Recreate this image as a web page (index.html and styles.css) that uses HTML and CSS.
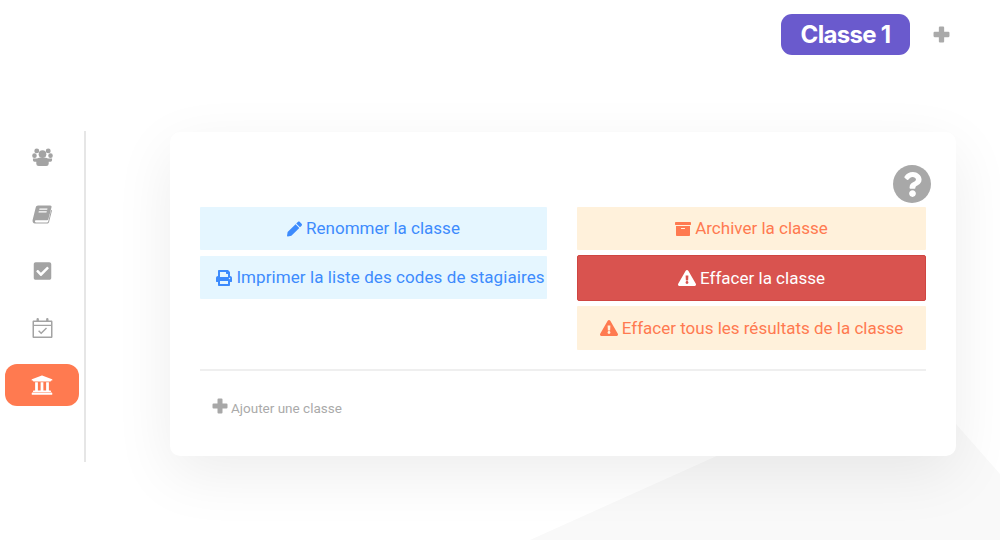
FILE: index.html
```html
<!DOCTYPE html>
<html lang="fr">
<head>
<meta charset="utf-8">
<title>Classes</title>
<link rel="stylesheet" href="styles.css">
</head>
<body>
<svg class="decor" viewBox="0 0 1000 540" aria-hidden="true">
  <polygon class="decor-b" points="530,540 730,450 956,424 1000,474 1000,540"/>
</svg>
<header class="topbar">
  <div class="tab">Classe 1</div>
  <svg class="tab-add" viewBox="0 0 16 16"><path d="M5.500 1.500a1 1 0 0 1 1-1h3a1 1 0 0 1 1 1v4h4a1 1 0 0 1 1 1v3a1 1 0 0 1-1 1h-4v4a1 1 0 0 1-1 1h-3a1 1 0 0 1-1-1v-4h-4a1 1 0 0 1-1-1v-3a1 1 0 0 1 1-1h4z"/></svg>
</header>
<main class="main">
  <nav class="sidebar">
    <div class="nav-item">
      <svg class="nav-icon" viewBox="0 0 22 20"><circle cx="5" cy="3.600" r="2.600"/><circle cx="17" cy="3.600" r="2.600"/><circle cx="2.600" cy="8.600" r="2.400"/><circle cx="19.400" cy="8.600" r="2.400"/><path d="M1 11.500h4.500v3.500H2.500A1.500 1.500 0 0 1 1 13.500zM21 11.500h-4.500v3.500h3A1.500 1.500 0 0 0 21 13.500z"/><circle cx="11" cy="7" r="4"/><path d="M4.500 13.500c0-1.800 1.500-2.800 3-2.800h7c1.500 0 3 1 3 2.800v3.500a2.500 2.500 0 0 1-2.500 2.500H7a2.500 2.500 0 0 1-2.500-2.500z"/></svg>
    </div>
    <div class="nav-item">
      <svg class="nav-icon" viewBox="0 0 20 20"><path fill-rule="evenodd" d="M5.500 1.500h12.200c1 0 1.600.8 1.300 1.800l-3 11.500c-.3 1-1 1.500-2 1.500H3.400c-1.300 0-1.300 2.200 0 2.200h11.100c.6 0 1-.3 1.200-.9l3-11.800.8.700-3 11.800c-.3 1-1 1.200-2 1.200H2.500C.8 19.500-.3 17.800.1 16L3.300 3.300C3.600 2.200 4.400 1.500 5.500 1.500zM7 4.500l-.3 1.200h8l.3-1.200zM6.300 7.300 6 8.500h8l.3-1.200z"/></svg>
    </div>
    <div class="nav-item">
      <svg class="nav-icon" viewBox="0 0 448 512"><path d="M400 480H48c-26.510 0-48-21.490-48-48V80c0-26.510 21.490-48 48-48h352c26.510 0 48 21.490 48 48v352c0 26.510-21.490 48-48 48zm-204.686-98.059l184-184c6.248-6.248 6.248-16.379 0-22.627l-22.627-22.627c-6.248-6.248-16.379-6.249-22.628 0L184 302.745l-69.859-69.859c-6.248-6.248-16.379-6.248-22.628 0L68.886 255.513c-6.248 6.248-6.248 16.379 0 22.627l104 104c6.249 6.250 16.379 6.250 22.628.001z"/></svg>
    </div>
    <div class="nav-item">
      <svg class="nav-icon" viewBox="0 0 20 20"><path fill-rule="evenodd" d="M1.200 2.500H4V1.300a1.200 1.200 0 0 1 2.400 0v1.200h7.200V1.300a1.200 1.200 0 0 1 2.400 0v1.200h2.800c.7 0 1.200.5 1.200 1.200v15c0 .7-.5 1.300-1.200 1.300H1.200C.5 20 0 19.400 0 18.700v-15c0-.7.500-1.200 1.200-1.200zM1.500 4v2.800h17V4zM1.500 8v10.500h17V8z"/><path d="M5.600 13.200l1-1 2.100 2.100 4.800-4.800 1 1-5.800 5.800z"/></svg>
    </div>
    <div class="nav-item nav-item-active">
      <svg class="nav-icon nav-icon-active" viewBox="0 0 512 512"><path d="M496 128v16a8 8 0 0 1-8 8h-24v12c0 6.627-5.373 12-12 12H60c-6.627 0-12-5.373-12-12v-12H24a8 8 0 0 1-8-8v-16a8 8 0 0 1 4.941-7.392l232-88a7.996 7.996 0 0 1 6.118 0l232 88A8 8 0 0 1 496 128zm-24 304H40c-13.255 0-24 10.745-24 24v16a8 8 0 0 0 8 8h464a8 8 0 0 0 8-8v-16c0-13.255-10.745-24-24-24zM96 192v192H60c-6.627 0-12 5.373-12 12v20h416v-20c0-6.627-5.373-12-12-12h-36V192h-64v192h-64V192h-64v192h-64V192H96z"/></svg>
    </div>
  </nav>
  <section class="card">
    <div class="help-row">
      <div class="help">
        <svg class="help-icon" viewBox="0 0 384 512"><path d="M202.021 0C122.202 0 70.503 32.703 29.914 91.026c-7.363 10.580-5.093 25.086 5.178 32.874l43.138 32.709c10.373 7.865 25.132 6.026 33.253-4.148 25.049-31.381 43.630-49.449 82.757-49.449 30.764 0 68.816 19.799 68.816 49.631 0 22.552-18.617 34.134-48.993 51.164-35.423 19.860-82.299 44.576-82.299 106.405V320c0 13.255 10.745 24 24 24h72.471c13.255 0 24-10.745 24-24v-5.773c0-42.860 125.268-44.645 125.268-160.627C377.504 66.256 286.902 0 202.021 0zM192 373.459c-38.196 0-69.271 31.075-69.271 69.271 0 38.195 31.075 69.270 69.271 69.270s69.271-31.075 69.271-69.271-31.075-69.270-69.271-69.270z"/></svg>
      </div>
    </div>
    <div class="actions">
      <div class="col col-left">
        <button class="btn btn-blue">
          <svg class="ico" viewBox="0 0 512 512"><path d="M497.900 142.100l-46.100 46.100c-4.700 4.700-12.300 4.700-17 0l-111-111c-4.700-4.700-4.700-12.300 0-17l46.100-46.100c18.700-18.700 49.100-18.700 67.900 0l60.100 60.100c18.800 18.700 18.800 49.100 0 67.900zM284.200 99.800L21.600 362.400.4 483.900c-2.900 16.400 11.400 30.600 27.800 27.800l121.500-21.300 262.600-262.600c4.700-4.700 4.700-12.300 0-17l-111-111c-4.800-4.700-12.400-4.700-17.100 0z"/></svg>Renommer la classe
        </button>
        <button class="btn btn-blue btn-spread">
          <svg class="ico ico-16" viewBox="0 0 512 512"><path d="M448 192V77.250c0-8.490-3.370-16.620-9.370-22.630L393.370 9.370c-6-6-14.140-9.370-22.630-9.370H96C78.330 0 64 14.330 64 32v160c-35.350 0-64 28.650-64 64v112c0 8.840 7.160 16 16 16h48v96c0 17.670 14.330 32 32 32h320c17.670 0 32-14.330 32-32v-96h48c8.840 0 16-7.160 16-16V256c0-35.350-28.650-64-64-64zm-64 256H128v-96h256v96zm0-224H128V64h192v48c0 8.840 7.160 16 16 16h48v96zm48 72c-13.250 0-24-10.750-24-24 0-13.260 10.750-24 24-24s24 10.740 24 24c0 13.250-10.750 24-24 24z"/></svg>Imprimer la liste des codes de stagiaires
        </button>
      </div>
      <div class="col col-right">
        <button class="btn btn-orange">
          <svg class="ico ico-16" viewBox="0 0 512 512"><path d="M32 448c0 17.700 14.300 32 32 32h384c17.700 0 32-14.300 32-32V160H32v288zm160-212c0-6.600 5.400-12 12-12h104c6.600 0 12 5.400 12 12v8c0 6.600-5.400 12-12 12H204c-6.600 0-12-5.400-12-12v-8zM480 32H32C14.300 32 0 46.300 0 64v48c0 8.800 7.200 16 16 16h480c8.800 0 16-7.200 16-16V64c0-17.700-14.300-32-32-32z"/></svg>Archiver la classe
        </button>
        <button class="btn btn-red">
          <svg class="ico ico-wide" viewBox="0 0 576 512"><path d="M569.517 440.013C587.975 472.007 564.806 512 527.940 512H48.054c-36.937 0-59.999-40.055-41.577-71.987L246.423 23.985c18.467-32.009 64.720-31.951 83.154 0l239.940 416.028zM288 354c-25.405 0-46 20.595-46 46s20.595 46 46 46 46-20.595 46-46-20.595-46-46-46zm-43.673-165.346l7.418 136c.347 6.364 5.609 11.346 11.982 11.346h48.546c6.373 0 11.635-4.982 11.982-11.346l7.418-136c.375-6.874-5.098-12.654-11.982-12.654h-63.383c-6.884 0-12.356 5.780-11.981 12.654z"/></svg>Effacer la classe
        </button>
        <button class="btn btn-orange btn-tall">
          <svg class="ico ico-wide" viewBox="0 0 576 512"><path d="M569.517 440.013C587.975 472.007 564.806 512 527.940 512H48.054c-36.937 0-59.999-40.055-41.577-71.987L246.423 23.985c18.467-32.009 64.720-31.951 83.154 0l239.940 416.028zM288 354c-25.405 0-46 20.595-46 46s20.595 46 46 46 46-20.595 46-46-20.595-46-46-46zm-43.673-165.346l7.418 136c.347 6.364 5.609 11.346 11.982 11.346h48.546c6.373 0 11.635-4.982 11.982-11.346l7.418-136c.375-6.874-5.098-12.654-11.982-12.654h-63.383c-6.884 0-12.356 5.780-11.981 12.654z"/></svg>Effacer tous les résultats de la classe
        </button>
      </div>
    </div>
    <div class="add-row">
      <svg class="add-icon" viewBox="0 0 16 16"><path d="M5.500 1.500a1 1 0 0 1 1-1h3a1 1 0 0 1 1 1v4h4a1 1 0 0 1 1 1v3a1 1 0 0 1-1 1h-4v4a1 1 0 0 1-1 1h-3a1 1 0 0 1-1-1v-4h-4a1 1 0 0 1-1-1v-3a1 1 0 0 1 1-1h4z"/></svg>
      <span class="add-label">Ajouter une classe</span>
    </div>
  </section>
</main>
</body>
</html>
```

FILE: styles.css
```css
* { box-sizing: border-box; }
html, body { margin: 0; padding: 0; }
body {
  width: 1000px;
  height: 540px;
  overflow: hidden;
  position: relative;
  background: #fff;
  font-family: Roboto, "Liberation Sans", sans-serif;
}
.decor { position: absolute; left: 0; top: 0; width: 1000px; height: 540px; }
.decor-b { fill: #f9f9f9; }

.topbar {
  position: relative;
  height: 131px;
  padding: 14px 50px 0 0;
  display: flex;
  justify-content: flex-end;
  align-items: flex-start;
}
.tab {
  width: 129px;
  height: 41px;
  border-radius: 11px;
  background: #6a5acd;
  color: #fff;
  font-family: Inter, sans-serif;
  font-size: 24px;
  font-weight: 700;
  line-height: 41px;
  text-align: center;
  letter-spacing: -0.7px;
}
.tab-add { width: 17px; height: 17px; margin: 12px 0 0 23px; fill: #aaa; }

.main { position: relative; display: flex; align-items: flex-start; }
.sidebar {
  width: 86px;
  height: 331px;
  padding: 5px 5px 0;
  border-right: 2px solid #e6e6e6;
  display: flex;
  flex-direction: column;
  gap: 15px;
}
.nav-item {
  width: 74px;
  height: 42px;
  border-radius: 12px;
  display: flex;
  align-items: center;
  justify-content: center;
}
.nav-item-active { background: #ff7a50; }
.nav-icon { width: 21px; height: 20px; fill: #a3a3a3; }
.nav-icon-active { width: 22px; height: 22px; fill: #fff; }

.card {
  width: 786px;
  height: 324px;
  margin: 1px 0 0 84px;
  padding: 33px 30px 0;
  border-radius: 10px;
  background: #fff;
  box-shadow: 0 18px 60px rgba(0, 0, 0, 0.075);
}
.help-row { display: flex; justify-content: flex-end; height: 42px; margin-right: -5px; }
.help {
  width: 38px;
  height: 38px;
  border-radius: 50%;
  background: #a8a8a8;
  display: flex;
  align-items: center;
  justify-content: center;
}
.help-icon { width: 19px; height: 25px; fill: #fff; }

.actions {
  display: grid;
  grid-template-columns: 347px 349px;
  column-gap: 30px;
  height: 164px;
  border-bottom: 2px solid #efefef;
}
.col { display: flex; flex-direction: column; align-items: stretch; }
.col-left { gap: 6px; }
.col-right { gap: 5px; }
.btn {
  height: 43px;
  padding: 0;
  border: 0;
  border-radius: 1px;
  font-family: Roboto, "Liberation Sans", sans-serif;
  font-size: 17px;
  line-height: 1;
  display: flex;
  align-items: center;
  justify-content: center;
  gap: 4px;
  white-space: nowrap;
}
.btn-spread { letter-spacing: 0.08px; padding-left: 14px; }
.btn-blue { background: #e5f6ff; color: #3d8bfd; }
.btn-orange { background: #fff1db; color: #ff7a50; }
.btn-red {
  height: 46px;
  background: #d9534f;
  border: 1px solid #cf4541;
  border-radius: 2px;
  color: #fff;
}
.btn-tall { height: 44px; }
.ico { width: 15px; height: 16px; fill: currentColor; flex: none; }
.ico-16 { width: 16px; }
.ico-wide { width: 18px; }

.add-row { display: flex; align-items: center; gap: 3px; padding: 29px 0 0 12px; }
.add-icon { width: 16px; height: 16px; fill: #a8a8a8; margin-top: -5px; }
.add-label { font-size: 13.5px; color: #aaa; }
```
